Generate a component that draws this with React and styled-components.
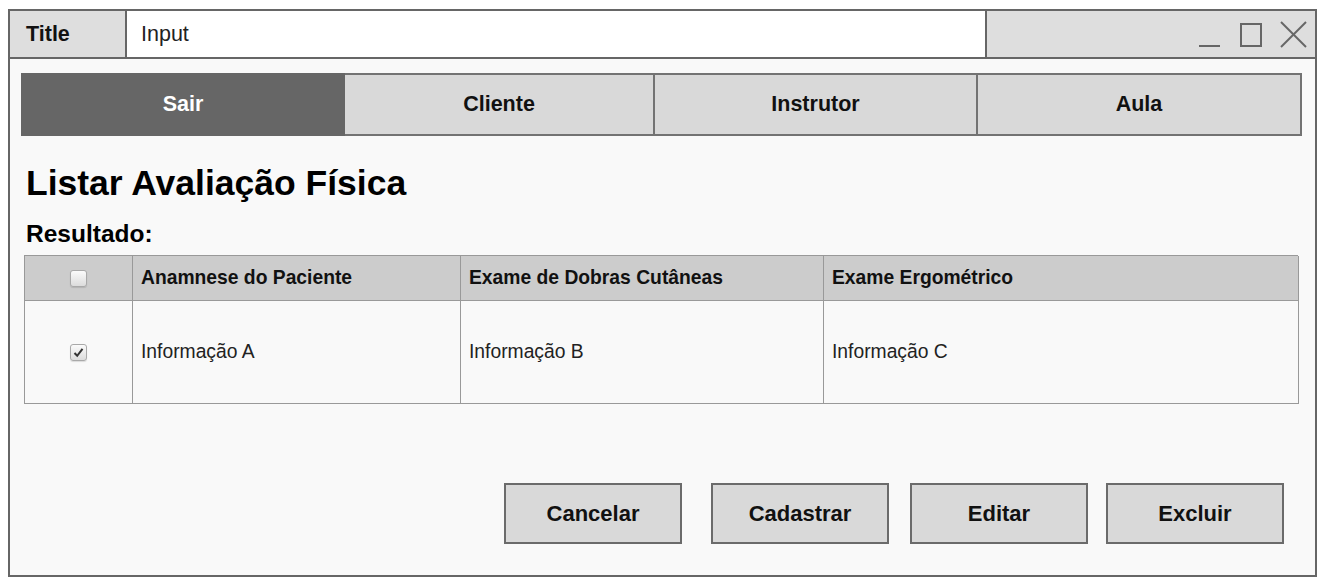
import React from "react"
import styled, { createGlobalStyle } from "styled-components"

const GlobalStyle = createGlobalStyle`
  html, body {
    margin: 0;
    padding: 0;
    background: #fff;
  }
  body {
    font-family: "Liberation Sans", Arial, sans-serif;
    color: #111;
  }
`

const Page = styled.div`
  padding: 9px 0 0 8px;
`

const Window = styled.div`
  box-sizing: border-box;
  width: 1309px;
  height: 568px;
  border: 2px solid #666;
  background: #f9f9f9;
  display: flex;
  flex-direction: column;
`

const TitleBar = styled.div`
  display: flex;
  height: 46px;
  flex-shrink: 0;
  border-bottom: 2px solid #666;
`

const TitleLabel = styled.div`
  box-sizing: border-box;
  width: 117px;
  padding-left: 16px;
  display: flex;
  align-items: center;
  background: #dedede;
  border-right: 2px solid #666;
  font-size: 21.5px;
  font-weight: bold;
  color: #111;
`

const TitleInput = styled.div`
  box-sizing: border-box;
  width: 860px;
  padding-left: 14px;
  display: flex;
  align-items: center;
  background: #fff;
  border-right: 2px solid #666;
  font-size: 21.5px;
  color: #222;
`

const Controls = styled.div`
  flex: 1;
  display: flex;
  justify-content: flex-end;
  padding-right: 8px;
  background: #dedede;
`

const TabBar = styled.div`
  display: grid;
  grid-template-columns: 324px 310px 323px 1fr;
  height: 63px;
  margin: 14px 13px 0 11px;
`

const Tab = styled.div`
  box-sizing: border-box;
  display: flex;
  align-items: center;
  justify-content: center;
  background: ${(p) => (p.$active ? "#666" : "#d9d9d9")};
  color: ${(p) => (p.$active ? "#fff" : "#111")};
  border: 2px solid ${(p) => (p.$active ? "#666" : "#737373")};
  border-left-width: ${(p) => (p.$first ? "2px" : "0")};
  font-size: 21.5px;
  font-weight: bold;
`

const Heading = styled.h1`
  margin: 27px 0 0 16px;
  font-size: 35.5px;
  line-height: 40px;
  font-weight: bold;
  color: #000;
`

const SubHeading = styled.h2`
  margin: 17px 0 0 16px;
  font-size: 24.5px;
  line-height: 28px;
  font-weight: bold;
  color: #000;
`

const Grid = styled.div`
  display: grid;
  grid-template-columns: 108px 328px 363px 475px;
  margin: 7px 0 0 14px;
  width: 1274px;
  box-sizing: border-box;
  border-top: 1px solid #999;
  border-left: 1px solid #999;
`

const Cell = styled.div`
  box-sizing: border-box;
  display: flex;
  align-items: center;
  justify-content: ${(p) => (p.$center ? "center" : "flex-start")};
  padding-left: ${(p) => (p.$center ? "0" : "8px")};
  height: ${(p) => (p.$head ? "45px" : "103px")};
  background: ${(p) => (p.$head ? "#cccccc" : "#f9f9f9")};
  border-right: 1px solid #999;
  border-bottom: 1px solid #999;
  font-size: 19.3px;
  font-weight: ${(p) => (p.$head ? "bold" : "normal")};
  color: ${(p) => (p.$head ? "#111" : "#222")};
`

const Box = styled.span`
  box-sizing: border-box;
  width: 17px;
  height: 17px;
  border: 1px solid #a9a9a9;
  border-radius: 3px;
  background: linear-gradient(#fbfbfb, #dcdcdc);
  box-shadow: 0 1px 1px rgba(0, 0, 0, 0.12);
  display: flex;
  align-items: center;
  justify-content: center;
`

const Actions = styled.div`
  display: flex;
  justify-content: flex-end;
  margin-top: 79px;
  padding-right: 31px;
`

const Button = styled.div`
  box-sizing: border-box;
  width: 178px;
  height: 61px;
  margin-left: ${(p) => p.$gap}px;
  display: flex;
  align-items: center;
  justify-content: center;
  background: #d9d9d9;
  border: 2px solid #6b6b6b;
  font-size: 22px;
  font-weight: bold;
  color: #111;
`

function WindowIcons() {
  return (
    <svg width="108" height="46" viewBox="0 0 108 46" style={{ display: "block" }}>
      <g stroke="#666" strokeWidth="2" fill="none">
        <line x1="0" y1="35" x2="21" y2="35" />
        <rect x="42" y="13" width="20" height="22" />
        <line x1="82" y1="11" x2="107" y2="36" />
        <line x1="107" y1="11" x2="82" y2="36" />
      </g>
    </svg>
  )
}

function Checkbox({ checked }) {
  return (
    <Box>
      {checked && (
        <svg width="11" height="11" viewBox="0 0 11 11">
          <path d="M1.5 6 L4.2 8.8 L9.5 1.8" stroke="#333" strokeWidth="2" fill="none" />
        </svg>
      )}
    </Box>
  )
}

const tabs = ["Sair", "Cliente", "Instrutor", "Aula"]
const columns = ["Anamnese do Paciente", "Exame de Dobras Cutâneas", "Exame Ergométrico"]
const row = ["Informação A", "Informação B", "Informação C"]
const buttons = [
  { label: "Cancelar", gap: 0 },
  { label: "Cadastrar", gap: 29 },
  { label: "Editar", gap: 21 },
  { label: "Excluir", gap: 18 },
]

export default function App() {
  return (
    <Page>
      <GlobalStyle />
      <Window>
        <TitleBar>
          <TitleLabel>Title</TitleLabel>
          <TitleInput>Input</TitleInput>
          <Controls>
            <WindowIcons />
          </Controls>
        </TitleBar>

        <TabBar>
          {tabs.map((t, i) => (
            <Tab key={t} $active={i === 0} $first={i === 0}>
              {t}
            </Tab>
          ))}
        </TabBar>

        <Heading>Listar Avaliação Física</Heading>
        <SubHeading>Resultado:</SubHeading>

        <Grid>
          <Cell $head $center>
            <Checkbox />
          </Cell>
          {columns.map((c) => (
            <Cell key={c} $head>
              {c}
            </Cell>
          ))}
          <Cell $center>
            <Checkbox checked />
          </Cell>
          {row.map((c) => (
            <Cell key={c}>{c}</Cell>
          ))}
        </Grid>

        <Actions>
          {buttons.map((b) => (
            <Button key={b.label} $gap={b.gap}>
              {b.label}
            </Button>
          ))}
        </Actions>
      </Window>
    </Page>
  )
}
